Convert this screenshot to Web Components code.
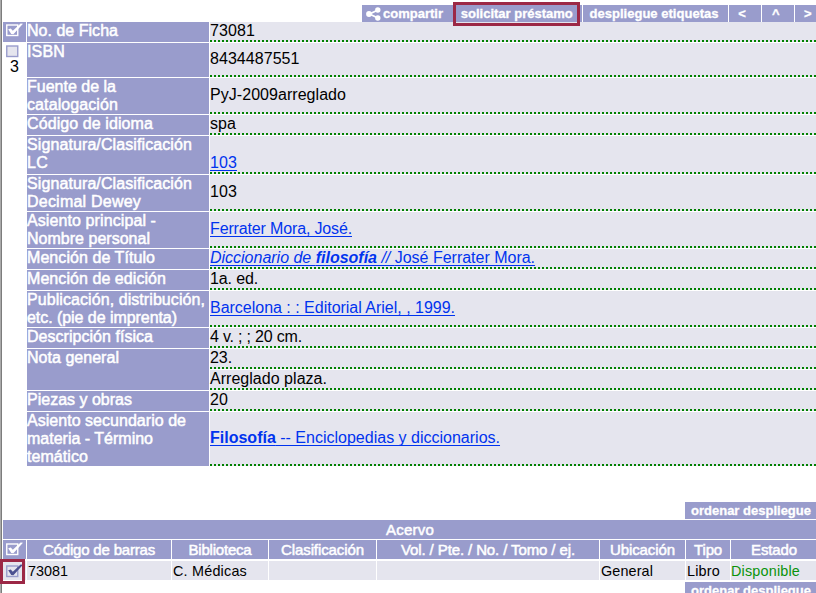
<!DOCTYPE html>
<html lang="es"><head><meta charset="utf-8"><title>Acervo</title>
<style>
body{margin:0;width:816px;height:593px;overflow:hidden;background:#fff;font-family:"Liberation Sans",Arial,sans-serif;font-size:16px;color:#000}
</style></head><body><catalog-page></catalog-page>
<script>
class FitText extends HTMLElement{
  connectedCallback(){
    this.attachShadow({mode:'open'}).innerHTML='<style>:host{display:inline;white-space:nowrap}</style><slot></slot>';
    const w=+this.getAttribute('w'), n=this.textContent.length;
    if(w) this.style.letterSpacing=((w-this.getBoundingClientRect().width)/n).toFixed(3)+'px';
  }
}
class CheckIcon extends HTMLElement{
  connectedCallback(){
    const k=this.getAttribute('kind')||'head';
    const c={head:['#fff','none','#fff'],row:['#9a9dcc','#e5e5ee','#4b5090'],empty:['#999ccc','#e5e5ee','']}[k];
    this.attachShadow({mode:'open'}).innerHTML=`<style>:host{display:block;width:18px;height:14px}svg{display:block}</style>
    <svg width="18" height="14"><rect x=".75" y="2" width="11" height="10.5" fill="${c[1]}" stroke="${c[0]}" stroke-width="1.4"/>${c[2]?`<path d="M2.2 6.2L4.8 5.4L6.8 7.8L14.6 .6L17 .8L7.4 11.2L5.2 11Z" fill="${c[2]}"/>`:''}</svg>`;
  }
}
class BarButton extends HTMLElement{
  connectedCallback(){
    this.attachShadow({mode:'open'}).innerHTML=`<style>
    :host{display:flex;align-items:center;box-sizing:border-box;height:17px;width:${this.getAttribute('w')}px;padding-left:${this.getAttribute('pad')}px;background:#999ccc;color:#fff;font:bold 13px/17px "Liberation Sans",Arial,sans-serif;-webkit-text-stroke:.3px #fff;position:relative;white-space:nowrap}
    :host([marked])::after{content:"";position:absolute;left:-1px;top:-3px;width:121px;height:18px;border:3px solid #9c2846}
    svg{margin-right:2px;flex:none}</style>
    ${this.hasAttribute('share')?'<svg width="15" height="14"><path d="M12 3L3.5 7L12 11" fill="none" stroke="#fff" stroke-width="1.8"/><circle cx="3" cy="7" r="2.9" fill="#fff"/><circle cx="11.8" cy="3" r="2.7" fill="#fff"/><circle cx="11.8" cy="11" r="2.7" fill="#fff"/></svg>':''}<slot></slot>`;
  }
}
class RecordRow extends HTMLElement{
  connectedCallback(){
    this.attachShadow({mode:'open'}).innerHTML=`<style>
    :host{display:grid;grid-template-columns:182px 606px;column-gap:1px;height:${this.getAttribute('h')}px;margin-bottom:1px}
    .l{background:#999ccc;color:#fff;line-height:18px;-webkit-text-stroke:.5px #fff;overflow:hidden;white-space:nowrap}
    .v{display:grid;row-gap:1px}
    </style><div class="l"><slot name="label"></slot></div><div class="v"><slot></slot></div>`;
  }
}
class RecordValue extends HTMLElement{
  connectedCallback(){
    this.attachShadow({mode:'open'}).innerHTML=`<style>
    :host{display:block;box-sizing:border-box;background:#e5e5ee linear-gradient(90deg,#008000 50%,transparent 50%) 0 100%/4px 2px repeat-x;line-height:18px;padding-top:${this.getAttribute('t')||0}px;white-space:nowrap}
    ::slotted(a){color:#0033ee;text-decoration:underline;text-decoration-thickness:1px;text-underline-offset:2px;text-decoration-skip-ink:none}
    </style><slot></slot>`;
  }
}
const widths=[23,144,96,107,222,85,44,86];
class HoldingsRow extends HTMLElement{
  connectedCallback(){
    const k=this.getAttribute('kind'), cells=[...this.children];
    cells.forEach((c,i)=>c.slot='c'+i);
    this.attachShadow({mode:'open'}).innerHTML=`<style>
    :host{display:grid;grid-template-columns:${k==='title'?'1fr':widths.map(w=>w+'px').join(' ')};column-gap:1px;width:814px;margin-bottom:${k==='head'?2:1}px;font-size:${k==='data'?14.4:15}px;line-height:${k==='data'?20:19}px}
    div{height:19px;background:${k==='data'?'#e5e5ee':'#999ccc'};${k==='data'?'padding-left:1px;box-sizing:border-box':'color:#fff;text-align:center;-webkit-text-stroke:.5px #fff'};white-space:nowrap}
    </style>`+cells.map((c,i)=>`<div><slot name="c${i}"></slot></div>`).join('');
  }
}
class CatalogPage extends HTMLElement{
  connectedCallback(){
    const v=(s,t=0)=>`<record-value t="${t}">${s}</record-value>`;
    const f=(s,w)=>`<fit-text w="${w}">${s}</fit-text>`;
    const link=(s,w)=>`<a>${f(s,w)}</a>`;
    const rows=[
     [20,f('No. de Ficha',91),v(f('73081',45))],
     [34,f('ISBN',38),v(f('8434487551',89.5),7)],
     [36,f('Fuente de la',89)+'<br>'+f('catalogación',91),v(f('PyJ-2009arreglado',136),8)],
     [20,f('Código de idioma',126),v(f('spa',26))],
     [38,f('Signatura/Clasificación',165)+'<br>'+f('LC',21),v(link('103',27),18)],
     [36,f('Signatura/Clasificación',165)+'<br>'+f('Decimal Dewey',114),v(f('103',27),8)],
     [36,f('Asiento principal -',129)+'<br>'+f('Nombre personal',123),v(link('Ferrater Mora, José.',142),8)],
     [20,f('Mención de Título',128),v(link('<i>Diccionario de <b>filosofía</b> // </i>José Ferrater Mora.',325))],
     [20,f('Mención de edición',139),v(f('1a. ed.',48))],
     [36,f('Publicación, distribución,',178)+'<br>'+f('etc. (pie de imprenta)',150),v(link('Barcelona : : Editorial Ariel, , 1999.',245),8)],
     [20,f('Descripción física',126),v(f('4 v. ; ; 20 cm.',92))],
     [41,f('Nota general',92),v(f('23.',22))+v(f('Arreglado plaza.',117))],
     [20,f('Piezas y obras',105),v(f('20',18))],
     [54,f('Asiento secundario de',159)+'<br>'+f('materia - Término',126)+'<br>'+f('temático',61),v(link('<b>Filosofía</b> -- Enciclopedias y diccionarios.',290),17)]];
    this.attachShadow({mode:'open'}).innerHTML=`<style>
    :host{display:grid;grid-template-columns:3px 813px;width:816px;height:593px;overflow:hidden}
    .edge{background:linear-gradient(90deg,#aaa 0 1px,#7c7c7c 1px 2px,#fff 2px)}
    .bar{display:flex;gap:1px;padding:5px 0 0 359px;height:17px}
    .record{display:grid;grid-template-columns:23px 789px;column-gap:1px;height:445px}
    .side{text-align:center}
    .sel{height:20px;background:#999ccc;box-sizing:border-box;padding:1px 0 0 3px}
    .empty{padding:2px 0 0 3px}
    .three{line-height:18px}
    .ord{display:flex;padding-left:682px}
    .ord.top{margin-top:35px;margin-bottom:1px}.ord.bottom{margin-top:2px}
    .ci{margin:2px 0 0 3px}.ok{color:#0a930a;margin-left:-1px}
    .pick{position:relative;display:block}.pick::after{content:"";position:absolute;left:-4px;top:-2px;width:19px;height:19px;border:3px solid #9c2846}
    .pick check-icon{padding:3px 0 0 2px}
    </style><div class="edge"></div><main>
    <div class="bar"><bar-button w="91" pad="4" share>${f('compartir',60)}</bar-button><bar-button w="129" pad="7" marked>${f('solicitar préstamo',112)}</bar-button><bar-button w="145" pad="6">${f('despliegue etiquetas',129)}</bar-button><bar-button w="32" pad="9">&lt;</bar-button><bar-button w="32" pad="10">^</bar-button><bar-button w="21" pad="9">&gt;</bar-button></div>
    <div class="record"><div class="side"><div class="sel"><check-icon></check-icon></div><div class="empty"><check-icon kind="empty"></check-icon></div><div class="three">3</div></div>
    <div>${rows.map(r=>`<record-row h="${r[0]}"><div slot="label">${r[1]}</div>${r[2]}</record-row>`).join('')}</div></div>
    <div class="ord top"><bar-button w="131" pad="6">${f('ordenar despliegue',120)}</bar-button></div>
    <holdings-row kind="title"><span>${f('Acervo',48)}</span></holdings-row>
    <holdings-row kind="head"><check-icon class="ci"></check-icon><span>${f('Código de barras',112)}</span><span>${f('Biblioteca',63)}</span><span>${f('Clasificación',83)}</span><span>${f('Vol. / Pte. / No. / Tomo / ej.',174)}</span><span>${f('Ubicación',65)}</span><span>${f('Tipo',28)}</span><span>${f('Estado',46)}</span></holdings-row>
    <holdings-row kind="data"><span class="pick"><check-icon kind="row"></check-icon></span><span>${f('73081',40)}</span><span>${f('C. Médicas',74)}</span><span></span><span></span><span>${f('General',52)}</span><span>${f('Libro',33)}</span><span class="ok">${f('Disponible',69)}</span></holdings-row>
    <div class="ord bottom"><bar-button w="131" pad="6">${f('ordenar despliegue',120)}</bar-button></div>
    </main>`;
  }
}
customElements.define('check-icon',CheckIcon);
customElements.define('bar-button',BarButton);
customElements.define('record-value',RecordValue);
customElements.define('record-row',RecordRow);
customElements.define('holdings-row',HoldingsRow);
customElements.define('catalog-page',CatalogPage);
customElements.define('fit-text',FitText);
</script></body></html>
